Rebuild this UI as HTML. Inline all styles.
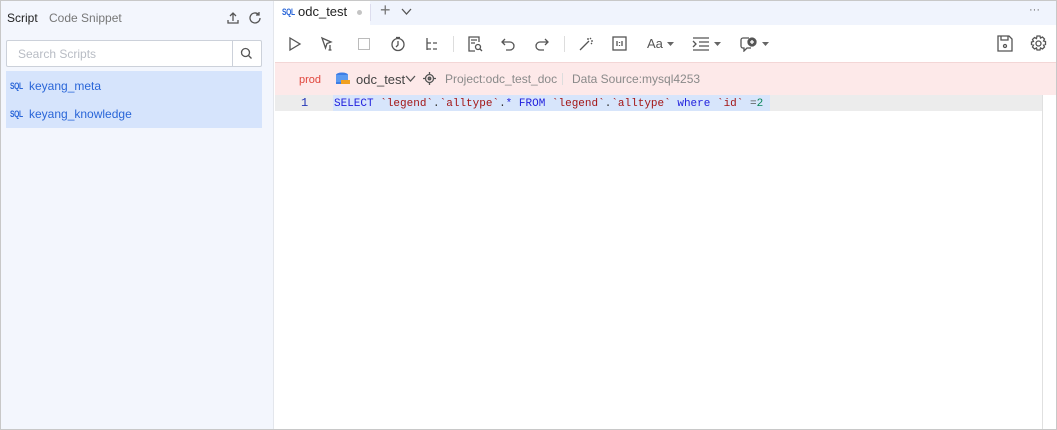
<!DOCTYPE html>
<html><head><meta charset="utf-8"><style>
*{box-sizing:border-box;margin:0;padding:0}
body{width:1057px;height:430px;overflow:hidden;font-family:"Liberation Sans",sans-serif;background:#fff;position:relative}
.frame{position:absolute;left:0;top:0;width:1057px;height:430px;border:1px solid #c8c8c8;}
.left{position:absolute;left:1px;top:1px;width:273px;height:428px;background:#f3f6fd;border-right:1px solid #e3e6ec}
.abs{position:absolute}
.sql{position:absolute;font-family:"Liberation Sans";font-weight:bold;font-size:9px;line-height:10px;color:#2a66d8;letter-spacing:-0.5px;transform:scaleX(.75);transform-origin:left}
.ic{position:absolute;stroke:#555;fill:none;stroke-width:1.3}
.code{font-family:"Liberation Mono",monospace;font-size:11px;line-height:14px}
</style></head><body>
<div class="frame"></div>
<div class="left">
 <div class="abs" style="left:6px;top:10px;font-size:12px;color:#222">Script</div>
 <div class="abs" style="left:48px;top:10px;font-size:12px;color:#777">Code Snippet</div>
 <svg class="ic" style="left:225px;top:10px" width="14" height="14" viewBox="0 0 14 14"><path d="M7 2v8M4 5l3-3 3 3M2 9v3h10V9"/></svg>
 <svg class="ic" style="left:246px;top:9px" width="16" height="16" viewBox="0 0 16 16" stroke-width="1.5"><path d="M13 8a5 5 0 1 1-1.5-3.6M12 2v3h-3"/></svg>
 <div class="abs" style="left:5px;top:39px;width:256px;height:27px;background:#fff;border:1px solid #ccd1da;border-radius:2px"></div>
 <div class="abs" style="left:17px;top:46px;font-size:12px;color:#b8bcc4">Search Scripts</div>
 <div class="abs" style="left:231px;top:40px;width:1px;height:25px;background:#ccd1da"></div>
 <svg class="ic" style="left:239px;top:46px" width="13" height="13" viewBox="0 0 13 13" stroke="#777"><circle cx="5.5" cy="5.5" r="4"/><path d="M8.5 8.5l3 3"/></svg>
 <div class="abs" style="left:5px;top:70px;width:256px;height:57px;background:#d6e4fc"></div>
 <div class="sql" style="left:9px;top:80px">SQL</div>
 <div class="abs" style="left:28px;top:78px;font-size:12px;color:#2a66d8">keyang_meta</div>
 <div class="sql" style="left:9px;top:108px">SQL</div>
 <div class="abs" style="left:28px;top:106px;font-size:12px;color:#2a66d8">keyang_knowledge</div>
</div>
<div class="abs" style="left:275px;top:1px;width:781px;height:24px;background:#f0f4fd"></div>
<div class="abs" style="left:275px;top:1px;width:95px;height:24px;background:#fff"></div>
<div class="sql" style="left:282px;top:7px">SQL</div>
<div class="abs" style="left:298px;top:4px;font-size:13px;color:#222">odc_test</div>
<div class="abs" style="left:357px;top:10px;width:5px;height:5px;border-radius:50%;background:#c4c4c4"></div>
<div class="abs" style="left:370px;top:4px;width:1px;height:17px;background:#dde"></div>
<div class="abs" style="left:380px;top:0px;font-size:18px;color:#777">+</div>
<svg class="ic" style="left:401px;top:8px" width="11" height="8" viewBox="0 0 11 8" stroke="#777"><path d="M1 1l4.5 5L10 1"/></svg>
<div class="abs" style="left:1029px;top:4px;font-size:11px;color:#666">···</div>
<!-- toolbar -->
<svg class="ic" style="left:288px;top:36px" width="14" height="16" viewBox="0 0 14 16"><path d="M2 2l10 6-10 6z"/></svg>
<svg class="ic" style="left:320px;top:36px" width="16" height="16" viewBox="0 0 16 16"><path d="M2 2l9 4-4 1.5L5.5 12z M10 9v5M8.5 14h3"/></svg>
<div class="abs" style="left:358px;top:38px;width:12px;height:12px;border:1.3px solid #bbb"></div>
<svg class="ic" style="left:390px;top:36px" width="16" height="16" viewBox="0 0 16 16"><circle cx="8" cy="8.5" r="6"/><path d="M8 5v4l-2 2M6 1.5h4"/></svg>
<svg class="ic" style="left:424px;top:36px" width="16" height="16" viewBox="0 0 16 16" stroke-width="1.8"><path d="M3 2v12M3 7h4M3 13h4M9 7h4M9 13h4"/></svg>
<div class="abs" style="left:453px;top:36px;width:1px;height:16px;background:#ddd"></div>
<svg class="ic" style="left:467px;top:35px" width="16" height="18" viewBox="0 0 16 18"><path d="M12 7V2H2v14h6M4 5h6M4 8h4"/><circle cx="11" cy="12" r="2.5"/><path d="M13 14l2 2"/></svg>
<svg class="ic" style="left:500px;top:36px" width="16" height="16" viewBox="0 0 16 16"><path d="M5 3L2 6l3 3M2 6h8a4 4 0 0 1 0 8H6"/></svg>
<svg class="ic" style="left:534px;top:36px" width="16" height="16" viewBox="0 0 16 16"><path d="M11 3l3 3-3 3M14 6H6a4 4 0 0 0 0 8h4"/></svg>
<div class="abs" style="left:564px;top:36px;width:1px;height:16px;background:#ddd"></div>
<svg class="ic" style="left:578px;top:36px" width="16" height="16" viewBox="0 0 16 16"><path d="M2 14l9-9M10 2v2M13 5h2M12 2l1 1M14 8l-1-1"/></svg>
<svg class="ic" style="left:612px;top:36px" width="15" height="15" viewBox="0 0 15 15"><rect x="1" y="1" width="13" height="13"/><path d="M5 5v5M10 5v5M7.5 6v1M7.5 9v1"/></svg>
<div class="abs" style="left:647px;top:36px;font-size:13px;color:#555">Aa</div>
<svg class="abs" style="left:667px;top:42px" width="7" height="4"><path d="M0 0h7L3.5 4z" fill="#666"/></svg>
<svg class="ic" style="left:692px;top:37px" width="18" height="14" viewBox="0 0 18 14"><path d="M1 1h16M7 5h10M7 9h10M1 13h16M1 4l3 3-3 3"/></svg>
<svg class="abs" style="left:714px;top:42px" width="7" height="4"><path d="M0 0h7L3.5 4z" fill="#666"/></svg>
<svg class="ic" style="left:740px;top:36px" width="18" height="16" viewBox="0 0 18 16"><path d="M9 2H3a2 2 0 0 0-2 2v6a2 2 0 0 0 2 2h1v3l3-3h4"/><circle cx="12" cy="6" r="4" fill="#555"/><path d="M12 4v4M10 6h4" stroke="#fff"/></svg>
<svg class="abs" style="left:762px;top:42px" width="7" height="4"><path d="M0 0h7L3.5 4z" fill="#666"/></svg>
<svg class="ic" style="left:997px;top:35px" width="16" height="17" viewBox="0 0 16 17"><path d="M1 1h11l3 3v12H1zM4 1v4h7V1"/><circle cx="8" cy="11" r="1.5"/></svg>
<svg class="ic" style="left:1030px;top:35px" width="17" height="17" viewBox="0 0 17 17" stroke-width="1.4"><circle cx="8.5" cy="8.5" r="2.5"/><path d="M7 1h3l.5 2 2-1 2 2-1 2 2 .5v3l-2 .5 1 2-2 2-2-1-.5 2H7l-.5-2-2 1-2-2 1-2-2-.5V7l2-.5-1-2 2-2 2 1z"/></svg>
<!-- info bar -->
<div class="abs" style="left:275px;top:62px;width:781px;height:33px;background:#fde9e9;border-top:1px solid #f3d6d6"></div>
<div class="abs" style="left:299px;top:74px;font-size:11px;color:#e0453c">prod</div>
<svg class="abs" style="left:335px;top:72px" width="16" height="14" viewBox="0 0 16 14"><ellipse cx="7" cy="3" rx="6" ry="2.5" fill="#3d7ee6"/><rect x="1" y="3" width="12" height="7" fill="#5b9af0"/><rect x="6" y="8" width="9" height="4" fill="#f0a020"/><rect x="1" y="10" width="5" height="2" fill="#3d7ee6"/></svg>
<div class="abs" style="left:356px;top:72px;font-size:13px;color:#444">odc_test</div>
<svg class="ic" style="left:405px;top:75px" width="11" height="8" viewBox="0 0 11 8" stroke="#666"><path d="M1 1l4.5 5L10 1"/></svg>
<svg class="ic" style="left:423px;top:72px" width="13" height="13" viewBox="0 0 13 13" stroke="#777"><circle cx="6.5" cy="6.5" r="4"/><circle cx="6.5" cy="6.5" r="1.3" fill="#777"/><path d="M6.5 0v2.5M6.5 10.5V13M0 6.5h2.5M10.5 6.5H13"/></svg>
<div class="abs" style="left:445px;top:72px;font-size:12px;color:#8a8a8a">Project:odc_test_doc</div>
<div class="abs" style="left:562px;top:73px;width:1px;height:12px;background:#ddd"></div>
<div class="abs" style="left:572px;top:72px;font-size:12px;color:#8a8a8a">Data Source:mysql4253</div>
<!-- code -->
<div class="abs" style="left:275px;top:95px;width:768px;height:16px;background:#ececec"></div>
<div class="abs" style="left:1042px;top:95px;width:1px;height:334px;background:#e0e0e0"></div>
<div class="abs" style="left:333px;top:95px;width:437px;height:16px;background:#d7e5fb"></div>
<div class="abs code" style="left:301px;top:96px;font-size:12px;color:#2537b8">1</div>
<div class="abs code" style="left:334px;top:97px;white-space:pre;color:#333"><span style="color:#1f1fdd">SELECT</span> <span style="color:#a31515">`legend`</span>.<span style="color:#a31515">`alltype`</span>.<span style="color:#1f1fdd">*</span> <span style="color:#1f1fdd">FROM</span> <span style="color:#a31515">`legend`</span>.<span style="color:#a31515">`alltype`</span> <span style="color:#1f1fdd">where</span> <span style="color:#a31515">`id`</span> <span style="color:#555">=</span><span style="color:#098658">2</span></div>
</body></html>
